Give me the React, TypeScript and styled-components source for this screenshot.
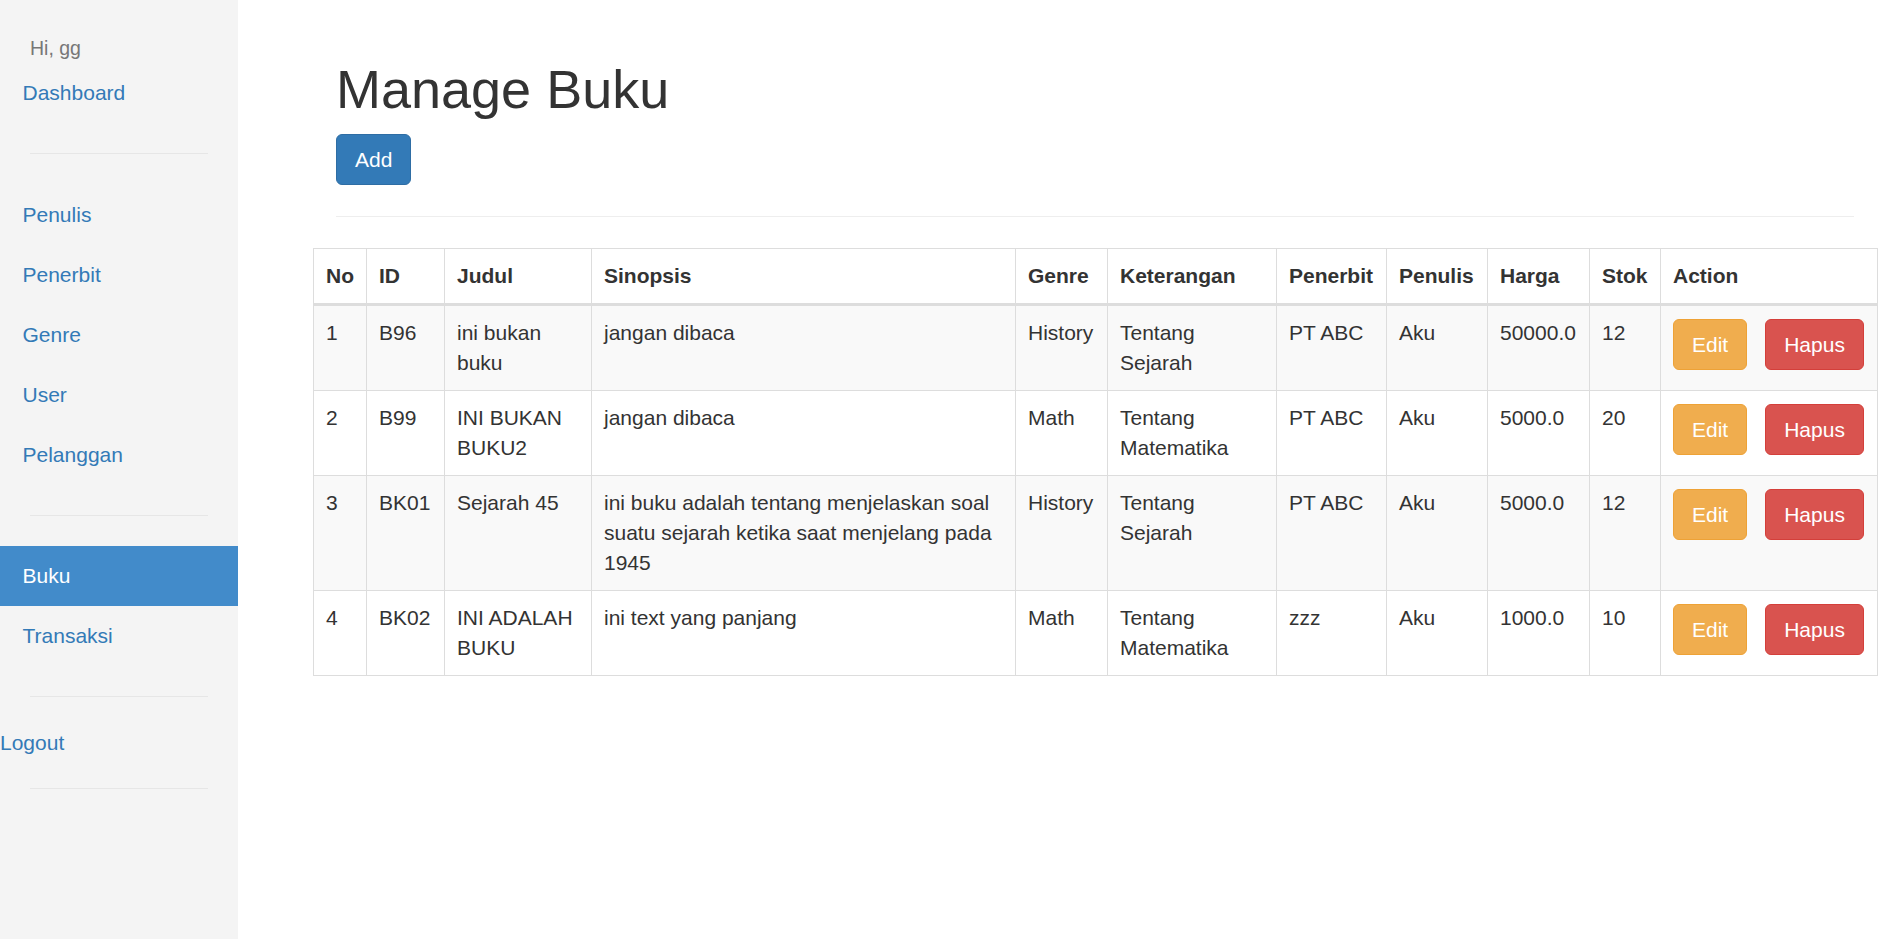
import React from 'react';
import styled, { createGlobalStyle } from 'styled-components';

const GlobalStyle = createGlobalStyle`
  html, body {
    margin: 0;
    padding: 0;
  }
  body {
    font-family: "Liberation Sans", Arial, Helvetica, sans-serif;
    font-size: 21px;
    line-height: 30px;
    color: #333;
    background: #fff;
  }
  * {
    box-sizing: border-box;
  }
`;

const Page = styled.div`
  display: flex;
  min-height: 100vh;
`;

const Sidebar = styled.nav`
  width: 238px;
  flex-shrink: 0;
  background: #f4f4f4;
  padding-top: 33px;
`;

const Greeting = styled.div`
  padding-left: 30px;
  font-size: 19.5px;
  line-height: 30px;
  color: #777;
`;

const NavLink = styled.a<{ $active?: boolean }>`
  display: block;
  padding: 15px 22.5px;
  line-height: 30px;
  text-decoration: none;
  color: ${(p) => (p.$active ? '#fff' : '#337ab7')};
  background: ${(p) => (p.$active ? '#428bca' : 'transparent')};
`;

const Divider = styled.hr`
  margin: 30px 30px 30.5px;
  border: 0;
  border-top: 1px solid #e6e6e6;
`;

const Logout = styled.a`
  display: block;
  line-height: 30px;
  color: #337ab7;
  text-decoration: none;
`;

const Main = styled.main`
  flex: 1;
  min-width: 0;
  padding: 0 2px 0 75px;
`;

const Header = styled.div`
  padding: 0 23px;
`;

const Title = styled.h1`
  margin: 60px 0 15px;
  font-size: 54px;
  line-height: 59.4px;
  font-weight: 500;
  color: #333;
`;

const Button = styled.button<{ $variant: 'primary' | 'warning' | 'danger' }>`
  display: inline-block;
  padding: 9.5px 18px;
  font-family: inherit;
  font-size: 21px;
  line-height: 30px;
  color: #fff;
  border-radius: 6px;
  cursor: pointer;
  white-space: nowrap;
  background: ${(p) =>
    p.$variant === 'primary' ? '#337ab7' : p.$variant === 'warning' ? '#f0ad4e' : '#d9534f'};
  border: 1px solid
    ${(p) =>
      p.$variant === 'primary' ? '#2e6da4' : p.$variant === 'warning' ? '#eea236' : '#d43f3a'};
`;

const Rule = styled.hr`
  margin: 31px 0 31px;
  border: 0;
  border-top: 1px solid #eee;
`;

const Table = styled.table`
  width: 1564px;
  table-layout: fixed;
  border-collapse: collapse;
  border: 1px solid #ddd;
`;

const Th = styled.th<{ $w: number }>`
  width: ${(p) => p.$w}px;
  padding: 12px;
  text-align: left;
  vertical-align: bottom;
  font-weight: bold;
  border: 1px solid #ddd;
  border-bottom: 3px solid #ddd;
`;

const Row = styled.tr`
  &:nth-of-type(odd) {
    background: #f9f9f9;
  }
`;

const Td = styled.td`
  padding: 12px;
  vertical-align: top;
  border: 1px solid #ddd;
`;

const Actions = styled.div`
  display: flex;
  gap: 18px;
  padding-top: 1px;
`;

const columns: [string, number][] = [
  ['No', 53],
  ['ID', 78],
  ['Judul', 147],
  ['Sinopsis', 424],
  ['Genre', 92],
  ['Keterangan', 169],
  ['Penerbit', 110],
  ['Penulis', 101],
  ['Harga', 102],
  ['Stok', 71],
  ['Action', 217],
];

const books = [
  { no: 1, id: 'B96', judul: 'ini bukan buku', sinopsis: 'jangan dibaca', genre: 'History', ket: 'Tentang Sejarah', penerbit: 'PT ABC', penulis: 'Aku', harga: '50000.0', stok: 12 },
  { no: 2, id: 'B99', judul: 'INI BUKAN BUKU2', sinopsis: 'jangan dibaca', genre: 'Math', ket: 'Tentang Matematika', penerbit: 'PT ABC', penulis: 'Aku', harga: '5000.0', stok: 20 },
  { no: 3, id: 'BK01', judul: 'Sejarah 45', sinopsis: 'ini buku adalah tentang menjelaskan soal suatu sejarah ketika saat menjelang pada 1945', genre: 'History', ket: 'Tentang Sejarah', penerbit: 'PT ABC', penulis: 'Aku', harga: '5000.0', stok: 12 },
  { no: 4, id: 'BK02', judul: 'INI ADALAH BUKU', sinopsis: 'ini text yang panjang', genre: 'Math', ket: 'Tentang Matematika', penerbit: 'zzz', penulis: 'Aku', harga: '1000.0', stok: 10 },
];

const App = () => {
  return (
    <>
      <GlobalStyle />
      <Page>
        <Sidebar>
          <Greeting>Hi, gg</Greeting>
          <NavLink href="#">Dashboard</NavLink>
          <Divider />
          <NavLink href="#">Penulis</NavLink>
          <NavLink href="#">Penerbit</NavLink>
          <NavLink href="#">Genre</NavLink>
          <NavLink href="#">User</NavLink>
          <NavLink href="#">Pelanggan</NavLink>
          <Divider />
          <NavLink href="#" $active>
            Buku
          </NavLink>
          <NavLink href="#">Transaksi</NavLink>
          <Divider />
          <Logout href="#">Logout</Logout>
          <Divider />
        </Sidebar>
        <Main>
          <Header>
            <Title>Manage Buku</Title>
            <Button $variant="primary">Add</Button>
            <Rule />
          </Header>
          <Table>
            <thead>
              <tr>
                {columns.map(([label, w]) => (
                  <Th key={label} $w={w}>
                    {label}
                  </Th>
                ))}
              </tr>
            </thead>
            <tbody>
              {books.map((b) => (
                <Row key={b.id}>
                  <Td>{b.no}</Td>
                  <Td>{b.id}</Td>
                  <Td>{b.judul}</Td>
                  <Td>{b.sinopsis}</Td>
                  <Td>{b.genre}</Td>
                  <Td>{b.ket}</Td>
                  <Td>{b.penerbit}</Td>
                  <Td>{b.penulis}</Td>
                  <Td>{b.harga}</Td>
                  <Td>{b.stok}</Td>
                  <Td>
                    <Actions>
                      <Button $variant="warning">Edit</Button>
                      <Button $variant="danger">Hapus</Button>
                    </Actions>
                  </Td>
                </Row>
              ))}
            </tbody>
          </Table>
        </Main>
      </Page>
    </>
  );
};

export default App;
